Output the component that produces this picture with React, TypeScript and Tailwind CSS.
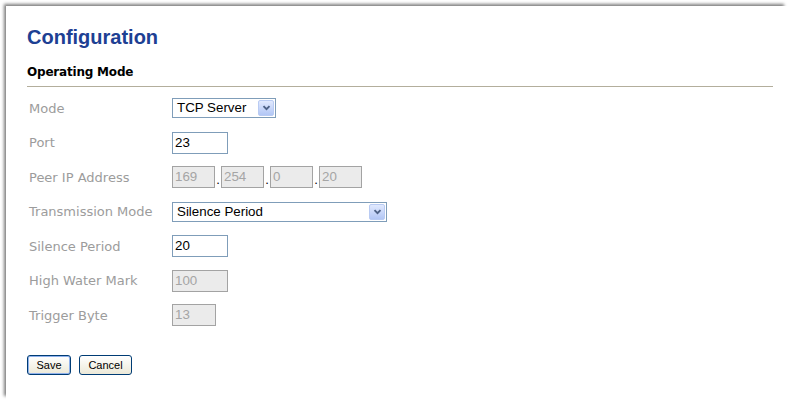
import React from "react";

const Chevron = () => (
  <span className="flex w-[16px] items-center justify-center rounded-[2px] border border-[#b9cbf3] bg-gradient-to-b from-[#e1e9fe] to-[#b2c6f5]">
    <svg width="9" height="6" viewBox="0 0 9 6">
      <path d="M1.5 1.2 L4.5 4.2 L7.5 1.2" stroke="#4d6185" strokeWidth="1.9" fill="none" />
    </svg>
  </span>
);

const Select = ({ value, w }: { value: string; w: string }) => (
  <div className={`flex h-[20px] ${w} border border-[#7f9db9] bg-white p-[1px]`}>
    <span className="flex-1 pl-[3px] text-[13.33px] leading-[16px] text-black">{value}</span>
    <Chevron />
  </div>
);

const Input = ({ value, w, disabled }: { value: string; w: string; disabled?: boolean }) => (
  <div
    className={`h-[22px] ${w} border pl-[2px] text-[13.33px] leading-[20px] ${
      disabled ? "border-[#a3a3a3] bg-[#ebebeb] text-[#a5a5a5]" : "border-[#7f9db9] bg-white text-black"
    }`}
  >
    {value}
  </div>
);

const Row = ({ label, children }: { label: string; children: React.ReactNode }) => (
  <div className="flex h-[34.5px] items-center">
    <div className="w-[145px] pl-[2px] font-['DejaVu_Sans',sans-serif] text-[13px] text-[#9c9c9c]">{label}</div>
    <div className="flex items-center font-['Liberation_Sans',Arial,sans-serif]">{children}</div>
  </div>
);

const Dot = () => <span className="w-[6px] self-end text-center text-[13px] leading-[16px] text-black">.</span>;

export default function App() {
  return (
    <div className="h-[404px] w-[794px] overflow-hidden bg-white">
      <div className="ml-[6px] mt-[6px] h-[394px] w-[782px] bg-white pl-[21px] pr-[15px] pt-[19px] shadow-[-3px_-3px_3px_-1px_rgba(0,0,0,0.5)]">
        <h1 className="h-[24px] font-['Liberation_Sans',Arial,sans-serif] text-[20px] font-bold leading-[24px] text-[#1d4093]">
          Configuration
        </h1>
        <h2 className="mt-[15px] h-[16px] font-['DejaVu_Sans',sans-serif] text-[12px] font-bold leading-[16px] tracking-[-0.2px] text-black">
          Operating Mode
        </h2>
        <div className="mt-[6px] h-[1px] bg-[#b3ae9c]" />
        <div className="mt-[4px]">
          <Row label="Mode">
            <Select value="TCP Server" w="w-[104px]" />
          </Row>
          <Row label="Port">
            <Input value="23" w="w-[56px]" />
          </Row>
          <Row label="Peer IP Address">
            <Input value="169" w="w-[43px]" disabled />
            <Dot />
            <Input value="254" w="w-[43px]" disabled />
            <Dot />
            <Input value="0" w="w-[43px]" disabled />
            <Dot />
            <Input value="20" w="w-[43px]" disabled />
          </Row>
          <Row label="Transmission Mode">
            <Select value="Silence Period" w="w-[215px]" />
          </Row>
          <Row label="Silence Period">
            <Input value="20" w="w-[56px]" />
          </Row>
          <Row label="High Water Mark">
            <Input value="100" w="w-[56px]" disabled />
          </Row>
          <Row label="Trigger Byte">
            <Input value="13" w="w-[44px]" disabled />
          </Row>
        </div>
        <div className="mt-[22.5px] flex gap-[8px] font-['Liberation_Sans',Arial,sans-serif] text-[11px] text-black">
          <button className="h-[20px] w-[44px] rounded-[3px] border border-[#003c74] bg-gradient-to-b from-white to-[#ece9d8] p-0 shadow-[inset_0_0_0_1px_#8fb1ec] leading-[18px]">
            Save
          </button>
          <button className="h-[20px] w-[53px] rounded-[3px] border border-[#003c74] bg-gradient-to-b from-white to-[#ece9d8] p-0 leading-[18px]">
            Cancel
          </button>
        </div>
      </div>
    </div>
  );
}
